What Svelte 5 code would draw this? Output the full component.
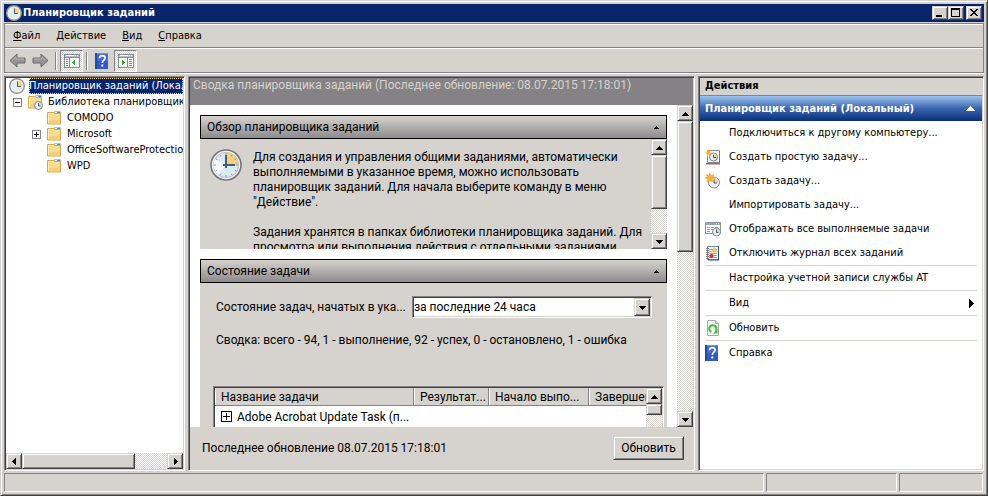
<script>
  let overviewOpen = $state(true);
  let statusOpen = $state(true);
  let libraryOpen = $state(true);
  let period = $state('day');

  const menus = ['Файл', 'Действие', 'Вид', 'Справка'];

  const folders = [
    { name: 'COMODO', expandable: false },
    { name: 'Microsoft', expandable: true },
    { name: 'OfficeSoftwareProtectionPlatform', expandable: false },
    { name: 'WPD', expandable: false }
  ];

  const actions = [
    { label: 'Подключиться к другому компьютеру...' },
    { label: 'Создать простую задачу...', icon: 'basic' },
    { label: 'Создать задачу...', icon: 'create' },
    { label: 'Импортировать задачу...' },
    { label: 'Отображать все выполняемые задачи', icon: 'running' },
    { label: 'Отключить журнал всех заданий', icon: 'journal' },
    { label: 'Настройка учетной записи службы AT', line: true },
    { label: 'Вид', line: true, submenu: true },
    { label: 'Обновить', icon: 'refresh', line: true },
    { label: 'Справка', icon: 'help', line: true }
  ];

  const columns = ['Название задачи', 'Результат...', 'Начало выпо...', 'Завершение'];
</script>

{#snippet clock(size)}
  <svg width={size} height={size} viewBox="0 0 32 32" aria-hidden="true">
    <circle cx="16" cy="16" r="15" fill="#f4f4f6" stroke="#77757c" stroke-width="1.6" />
    <circle cx="16" cy="16" r="12.6" fill="#dbe9f5" stroke="#b9bcc6" />
    <path d="M5 10 16 16 8 26A13 13 0 0 1 5 10Z" fill="#f6fbff" />
    <path d="M16 16V3.6A12.4 12.4 0 0 1 28.4 16Z" fill="#f3cf7a" />
    <path d="M16 4v2M16 26v2M4 16h2M26 16h2M9.8 5.6l1 1.7M22.2 5.6l-1 1.7M9.8 26.4l1-1.7M22.2 26.4l-1-1.7M5.6 9.8l1.7 1M5.6 22.2l1.7-1M26.4 22.2l-1.7-1M26.4 9.8l-1.7 1" stroke="#7f95b0" />
    <path d="M16 6v13M13 16h12" fill="none" stroke="#3f5f86" stroke-width="2" />
  </svg>
{/snippet}

{#snippet smallClock()}
  <svg width="16" height="16" viewBox="0 0 16 16" aria-hidden="true">
    <circle cx="8" cy="8" r="7.3" fill="#f4f4f4" stroke="#94928f" stroke-width="1.4" />
    <circle cx="8" cy="8" r="5.6" fill="#e4edf5" />
    <path d="M8 8.500V2.400A5.600 5.600 0 0 1 13.600 8.500Z" fill="#f2d58a" />
    <path d="M8.500 3.500v5h3.500" fill="none" stroke="#4d5b70" />
  </svg>
{/snippet}

{#snippet folder(withClock)}
  <svg width="16" height="16" viewBox="-1 0 16 16" aria-hidden="true">
    <path d="M7.5 1.500h6v4h-6Z" fill="#fff" stroke="#d9b668" />
    <path d="M10 2h3v1h-3Z" fill="#3f8fe0" />
    <path d="M.500 2.500h6l1.500 1h5.500v10.500H.500Z" fill="#fbdc8e" stroke="#d6a94e" />
    <path d="M1 3h5.500v1H1ZM1 4h1v9H1Z" fill="#fdeebd" />
    <path d="M2 10h11v3.500H2Z" fill="#f5cf77" />
    {#if withClock}
      <circle cx="10.5" cy="11.5" r="4" fill="#eef5fb" stroke="#6b8199" />
      <path d="M10.5 11.5V8a3.5 3.5 0 0 1 3.5 3.5Z" fill="#f0d48c" />
      <path d="M10.5 9v3h2" fill="none" stroke="#44607f" />
    {/if}
  </svg>
{/snippet}

{#snippet help()}
  <svg width="16" height="16" viewBox="0 0 16 16" aria-hidden="true">
    <path d="M0 0h13v16H0Z" fill="#416bd4" />
    <path d="M0 8h13v8H0Z" fill="#3459c2" />
    <path d="M0 0h2v16H0Z" fill="#234a9c" />
    <path d="M2 0h11v1H2Z" fill="#6f92e4" />
    <path d="M4.5 5.200C4.5 3.200 5.800 2.600 7.200 2.600c1.600 0 2.900.800 2.900 2.400 0 2.200-2.800 2.300-2.800 5" fill="none" stroke="#fff" stroke-width="1.700" />
    <path d="M6.300 11.500h2v2h-2Z" fill="#fff" />
  </svg>
{/snippet}

{#snippet paneIcon(right)}
  <svg width="16" height="14" viewBox="0 0 16 14" shape-rendering="crispEdges" aria-hidden="true">
    <path d="M0 0h16v14H0Z" fill="#848e97" />
    <path d="M1 1h14v2H1Z" fill="#b5bec6" />
    <path d="M2 1h8v1H2ZM11 1h1v1h-1ZM13 1h1v1h-1Z" fill="#fff" />
    <path d="M1 4h14v9H1Z" fill="#f7f7f7" />
    {#if right}
      <path d="M9 4h1v9H9Z" fill="#848e97" />
      <path d="M11 5h3v1h-3ZM11 7h3v1h-3ZM11 9h3v1h-3ZM11 11h3v1h-3Z" fill="#6b8ec6" />
      <path d="M4 6h1v1h1v1h1v1H6v1H5v1H4Z" fill="#31ae31" />
    {:else}
      <path d="M5 4h1v9H5Z" fill="#848e97" />
      <path d="M2 5h2v1H2ZM2 7h2v1H2ZM2 9h2v1H2ZM2 11h2v1H2Z" fill="#6b8ec6" />
      <path d="M11 6h-1v1H9v1H8v1h1v1h1v1h1Z" fill="#31ae31" />
    {/if}
  </svg>
{/snippet}

{#snippet arrow(dir)}
  <svg class="arrow" width="7" height="7" viewBox="0 0 7 7" shape-rendering="crispEdges" aria-hidden="true">
    {#if dir === 'up'}
      <path d="M3 2h1v1h1v1h1v1h1v1H0V5h1V4h1V3h1Z" />
    {:else if dir === 'down'}
      <path d="M0 2h7v1H6v1H5v1H4v1H3V5H2V4H1V3H0Z" />
    {:else if dir === 'left'}
      <path d="M1 3h1V2h1V1h1V0h1v7H4V6H3V5H2V4H1Z" />
    {:else}
      <path d="M2 0h1v1h1v1h1v1h1v1H5v1H4v1H3v1H2Z" />
    {/if}
  </svg>
{/snippet}

{#snippet scrollbar(thumb, horizontal)}
  <div class="scrollbar" class:horizontal>
    <button class="raised" aria-label={horizontal ? 'Влево' : 'Вверх'}>{@render arrow(horizontal ? 'left' : 'up')}</button>
    <div class="track">
      <div class="thumb raised" style={horizontal ? `width: ${thumb}%` : `height: ${thumb}%`}></div>
    </div>
    <button class="raised" aria-label={horizontal ? 'Вправо' : 'Вниз'}>{@render arrow(horizontal ? 'right' : 'down')}</button>
  </div>
{/snippet}

{#snippet actionIcon(name)}
  {#if name === 'basic'}
    <svg width="16" height="16" viewBox="0 0 16 16" aria-hidden="true">
      <path d="M2.5 1.500h12v12h-12Z" fill="#fafafa" stroke="#8c8688" />
      <path d="M1 14h14v1.500H1Z" fill="#9c6a66" />
      <path d="M14.500 2v13" stroke="#7d7779" />
      <circle cx="8.500" cy="8" r="4" fill="#e8eff6" stroke="#76808e" />
      <path d="M8.500 8V4.500A3.500 3.500 0 0 1 12 8Z" fill="#f0d48c" />
      <path d="M8.500 6v2.500h2.500" fill="none" stroke="#4a5668" />
      <path d="M3 0 4 2 6 1 5 3 7 4 5 5 5.500 7 3.500 6 2 7.500 2 5 0 4 2 3 1 1 3 2Z" fill="#f8b63e" />
    </svg>
  {:else if name === 'create'}
    <svg width="16" height="16" viewBox="0 0 16 16" aria-hidden="true">
      <circle cx="9" cy="9.500" r="5.500" fill="#eef1f5" stroke="#8b8a8e" />
      <path d="M9 9.500V5A4.500 4.500 0 0 1 13.500 9.500Z" fill="#f0d48c" />
      <path d="M9 6.500v3.500h3" fill="none" stroke="#4a5668" />
      <path d="M4.500 0 5.800 2.500 9 1.500 7.500 4 9.500 5.500 7 6 7.500 9 4.800 7.500 2 9 2.700 6 0 5 2.400 3.800 1.500 1.300 3.800 2.400Z" fill="#f9b02c" stroke="#ef9a1c" stroke-width=".5" />
    </svg>
  {:else if name === 'running'}
    <svg width="16" height="16" viewBox="0 0 16 16" aria-hidden="true">
      <path d="M.5 1.500h15v11H.5Z" fill="#fbfbfb" stroke="#8a939c" />
      <path d="M1 2h14v2H1Z" fill="#9aa6b2" />
      <path d="M11 2h1v1h-1ZM13 2h1v1h-1Z" fill="#fff" />
      <path d="M2 6.500h3M6 6.500h3M10 6.500h3M2 8.500h3M6 8.500h2M2 10.500h3" stroke="#9298a0" />
      <circle cx="11.500" cy="11" r="4" fill="#e6f0f8" stroke="#7e8896" />
      <path d="M11.500 11V7.500A3.500 3.500 0 0 1 15 11Z" fill="#f0d48c" />
      <path d="M11.500 8.500v3h2" fill="none" stroke="#4a5668" />
    </svg>
  {:else if name === 'journal'}
    <svg width="16" height="16" viewBox="0 0 16 16" aria-hidden="true">
      <path d="M2.500 1.500h11v13h-11Z" fill="#f6f9fd" stroke="#5d8cc4" />
      <path d="M13 1h1v14.500H3v-1h10Z" fill="#2c5487" />
      <path d="M4 4.500h8M4 6.500h8M4 8.500h8M4 10.500h8M4 12.500h8" stroke="#7fa8d6" />
      <path d="M1 3.500h3M1 5.500h3M1 7.500h3M1 9.500h3M1 11.500h3M1 13.500h3" stroke="#808080" />
      <path d="M9.500 2 12.500 7h-6Z" fill="#fbd02c" stroke="#e8b820" stroke-width=".5" />
      <circle cx="6.500" cy="11" r="2" fill="#d8262a" />
    </svg>
  {:else if name === 'refresh'}
    <svg width="16" height="16" viewBox="0 0 16 16" aria-hidden="true">
      <path d="M2.500.5h8l3 3v12h-11Z" fill="#fdfdfd" stroke="#a8a8a8" />
      <path d="M10.500.5v3h3" fill="#e8e8e8" stroke="#a8a8a8" />
      <path d="M6.300 12A3.600 3.600 0 1 1 10.800 10.800" fill="none" stroke="#3cb83a" stroke-width="2" />
      <path d="M12.500 9v4.500H8Z" fill="#3cb83a" />
    </svg>
  {:else if name === 'help'}
    {@render help()}
  {/if}
{/snippet}

<div class="window">
  <header class="titlebar">
    {@render smallClock()}
    <h1>Планировщик заданий</h1>
    <div class="window-buttons">
      <button class="raised" aria-label="Свернуть">
        <svg width="12" height="10" viewBox="0 0 12 10" shape-rendering="crispEdges"><path d="M2 7h6v2H2Z" /></svg>
      </button>
      <button class="raised" aria-label="Развернуть">
        <svg width="12" height="10" viewBox="0 0 12 10" shape-rendering="crispEdges"><path d="M1 0h9v9H1ZM2 2v6h7V2Z" fill-rule="evenodd" /></svg>
      </button>
      <button class="raised close" aria-label="Закрыть">
        <svg width="12" height="10" viewBox="0 0 12 10" shape-rendering="crispEdges"><path d="M2 1h2v1h1v1h2V2h1V1h2v1H9v1H8v1H7v1h1v1h1v1h1v1H8V7H7V6H5v1H4v1H2V7h1V6h1V5h1V4H4V3H3V2H2Z" /></svg>
      </button>
    </div>
  </header>

  <div class="bars">
    <nav class="menubar">
      {#each menus as menu}
        <button><u>{menu[0]}</u>{menu.slice(1)}</button>
      {/each}
    </nav>
    <div class="toolbar">
      <button aria-label="Назад">
        <svg width="17" height="15" viewBox="0 0 17 15"><path d="M1 7.500 8 1v4h8v5H8v4Z" fill="#949494" stroke="#6b6b6b" /><path d="M3 7.500 7 4v2h8" fill="none" stroke="#b5b5b5" /></svg>
      </button>
      <button aria-label="Вперёд">
        <svg width="17" height="15" viewBox="0 0 17 15"><path d="M16 7.500 9 1v4H1v5h8v4Z" fill="#949494" stroke="#6b6b6b" /><path d="M2 6h8V4l3 3" fill="none" stroke="#b5b5b5" /></svg>
      </button>
      <span class="divider"></span>
      <button class="pressed" aria-label="Дерево консоли">{@render paneIcon(false)}</button>
      <span class="divider"></span>
      <button aria-label="Справка">{@render help()}</button>
      <button class="pressed" aria-label="Панель действий">{@render paneIcon(true)}</button>
    </div>
  </div>

  <main class="panes">
    <aside class="pane tree-pane">
      <ul class="tree">
        <li class="root">
          {@render smallClock()}
          <span class="selected">Планировщик заданий (Локальный)</span>
        </li>
        <li class="library">
          <button class="expander" aria-label="Свернуть библиотеку" onclick={() => (libraryOpen = !libraryOpen)}>
            <svg width="7" height="7" viewBox="0 0 7 7"><path d={libraryOpen ? 'M1 3h5v1H1Z' : 'M1 3h5v1H1ZM3 1h1v5H3Z'} /></svg>
          </button>
          {@render folder(true)}
          <span>Библиотека планировщика заданий</span>
        </li>
        {#if libraryOpen}
          {#each folders as item}
            <li class="child">
              {#if item.expandable}
                <button class="expander" aria-label="Развернуть {item.name}">
                  <svg width="7" height="7" viewBox="0 0 7 7"><path d="M1 3h5v1H1ZM3 1h1v5H3Z" /></svg>
                </button>
              {:else}
                <span class="no-expander"></span>
              {/if}
              {@render folder(false)}
              <span>{item.name}</span>
            </li>
          {/each}
        {/if}
      </ul>
      {@render scrollbar(78, true)}
    </aside>

    <section class="pane summary">
      <h2>Сводка планировщика заданий (Последнее обновление: 08.07.2015 17:18:01)</h2>
      <div class="summary-view">
        <div class="cards">
          <article class="card">
            <button class="card-title" onclick={() => (overviewOpen = !overviewOpen)}>
              <span>Обзор планировщика заданий</span>
              <svg width="5" height="3" viewBox="0 0 5 3" shape-rendering="crispEdges"><path d="M2 0h1v1h1v1h1v1H0V2h1V1h1Z" /></svg>
            </button>
            {#if overviewOpen}
              <div class="overview">
                <div class="overview-icon">{@render clock(32)}</div>
                <div class="overview-text">
                  <p>Для создания и управления общими заданиями, автоматически выполняемыми в указанное время, можно использовать планировщик заданий. Для начала выберите команду в меню "Действие".</p>
                  <p>Задания хранятся в папках библиотеки планировщика заданий. Для просмотра или выполнения действия с отдельными заданиями</p>
                </div>
                {@render scrollbar(69, false)}
              </div>
            {/if}
          </article>

          <article class="card">
            <button class="card-title" onclick={() => (statusOpen = !statusOpen)}>
              <span>Состояние задачи</span>
              <svg width="5" height="3" viewBox="0 0 5 3" shape-rendering="crispEdges"><path d="M2 0h1v1h1v1h1v1H0V2h1V1h1Z" /></svg>
            </button>
            {#if statusOpen}
              <div class="status">
                <div class="period">
                  <label for="period">Состояние задач, начатых в ука...</label>
                  <div class="select-box">
                    <select id="period" bind:value={period}>
                      <option value="hour">за последний час</option>
                      <option value="day">за последние 24 часа</option>
                      <option value="week">за последние 7 дней</option>
                      <option value="month">за последние 30 дней</option>
                    </select>
                    <span class="drop raised">{@render arrow('down')}</span>
                  </div>
                </div>
                <p>Сводка: всего - 94, 1 - выполнение, 92 - успех, 0 - остановлено, 1 - ошибка</p>
                <div class="list">
                  <div class="list-view">
                    <table>
                      <thead>
                        <tr>
                          {#each columns as column}
                            <th>{column}</th>
                          {/each}
                        </tr>
                      </thead>
                      <tbody>
                        <tr>
                          <td>
                            <button class="expander" aria-label="Развернуть задачу">
                              <svg width="9" height="9" viewBox="0 0 9 9"><path d="M1 4h7v1H1ZM4 1h1v7H4Z" /></svg>
                            </button>
                            Adobe Acrobat Update Task (п...
                          </td>
                          <td></td>
                          <td></td>
                          <td></td>
                        </tr>
                      </tbody>
                    </table>
                  </div>
                  {@render scrollbar(7, false)}
                </div>
              </div>
            {/if}
          </article>
        </div>
        {@render scrollbar(45, false)}
      </div>
      <footer>
        <span>Последнее обновление 08.07.2015 17:18:01</span>
        <button class="refresh raised">Обновить</button>
      </footer>
    </section>

    <aside class="pane actions">
      <h2>Действия</h2>
      <button class="group">
        <span>Планировщик заданий (Локальный)</span>
        <svg width="9" height="5" viewBox="0 0 9 5" shape-rendering="crispEdges"><path d="M4 0h1v1h1v1h1v1h1v1h1v1H0V4h1V3h1V2h1V1h1Z" fill="#fff" /></svg>
      </button>
      <ul>
        {#each actions as action}
          <li class:line={action.line}>
            <button>
              <span class="icon">{@render actionIcon(action.icon)}</span>
              <span>{action.label}</span>
              {#if action.submenu}
                <svg class="submenu" width="5" height="9" viewBox="0 0 5 9" shape-rendering="crispEdges"><path d="M0 0h1v1h1v1h1v1h1v1h1v1H4v1H3v1H2v1H1v1H0Z" /></svg>
              {/if}
            </button>
          </li>
        {/each}
      </ul>
    </aside>
  </main>

  <div class="statusbar">
    <span></span>
    <span></span>
    <span></span>
  </div>
</div>

<style>
  :global(body) {
    margin: 0;
  }

  .window {
    --face: #d6d3ce;
    --shadow: #848284;
    --dark: #424142;
    display: flex;
    flex-direction: column;
    box-sizing: border-box;
    height: 100vh;
    padding: 3px;
    border: 1px solid;
    border-color: var(--face) var(--dark) var(--dark) var(--face);
    box-shadow: inset 1px 1px #fff, inset -1px -1px var(--shadow);
    background: var(--face);
    color: #000;
    font: 11px/16px "DejaVu Sans Condensed", "DejaVu Sans", Tahoma, sans-serif;
  }

  .window * {
    box-sizing: border-box;
  }

  button {
    display: flex;
    align-items: center;
    justify-content: center;
    padding: 0;
    border: none;
    background: none;
    color: inherit;
    font: inherit;
  }

  svg {
    display: block;
    flex: none;
  }

  h1,
  h2,
  p,
  ul {
    margin: 0;
    padding: 0;
    font-size: inherit;
    list-style: none;
  }

  .raised {
    border: 1px solid;
    border-color: var(--face) var(--dark) var(--dark) var(--face);
    box-shadow: inset 1px 1px #fff, inset -1px -1px var(--shadow);
    background: var(--face);
  }

  .titlebar {
    display: flex;
    align-items: center;
    gap: 1px;
    height: 18px;
    padding: 0 2px;
    background: #08246b;
    color: #fff;
    flex: none;
  }

  .titlebar h1 {
    flex: 1;
    font-weight: bold;
  }

  .window-buttons {
    display: flex;
    color: #000;
  }

  .window-buttons button {
    width: 16px;
    height: 14px;
  }

  .window-buttons .close {
    margin-left: 2px;
  }

  /* menu and toolbar */
  .bars {
    flex: none;
    margin-top: 1px;
    border: 1px solid var(--shadow);
    box-shadow: 0 1px #fff;
  }

  .menubar {
    display: flex;
    height: 24px;
    align-items: center;
    border-top: 1px solid #fff;
    border-bottom: 1px solid var(--shadow);
  }

  .menubar button {
    padding: 0 8px;
  }

  .toolbar {
    display: flex;
    height: 24px;
    align-items: center;
    padding-left: 1px;
    border-top: 1px solid #fff;
  }

  .toolbar button {
    width: 23px;
    height: 22px;
  }

  .toolbar .pressed {
    border: 1px solid;
    border-color: var(--shadow) #fff #fff var(--shadow);
    background: repeating-conic-gradient(#fff 0 25%, var(--face) 0 50%) 0 0 / 2px 2px;
  }

  .divider {
    width: 2px;
    height: 18px;
    margin: 0 3px;
    border-left: 1px solid var(--shadow);
    border-right: 1px solid #fff;
  }

  /* panes */
  .panes {
    display: grid;
    grid-template-columns: 181px 1fr 286px;
    gap: 3px;
    flex: 1;
    min-height: 0;
    margin-top: 3px;
  }

  .pane {
    display: flex;
    flex-direction: column;
    min-width: 0;
    min-height: 0;
    border: 1px solid;
    border-color: var(--shadow) #fff #fff var(--shadow);
    box-shadow: inset 1px 1px var(--dark), inset -1px -1px var(--face);
    padding: 1px;
    overflow: hidden;
    background: #fff;
  }

  .tree {
    flex: 1;
    overflow: hidden;
  }

  .tree li {
    display: flex;
    align-items: center;
    height: 16px;
    white-space: nowrap;
  }

  .root {
    gap: 4px;
    padding-left: 3px;
  }

  .selected {
    flex: 1;
    overflow: hidden;
    outline: 1px dotted #f7db94;
    outline-offset: -1px;
    background: #08246b;
    color: #fff;
  }

  .library {
    gap: 5px;
    padding-left: 7px;
  }

  .child {
    gap: 5px;
    padding-left: 26px;
  }

  .expander {
    flex: none;
    border: 1px solid var(--shadow);
    background: #fff;
  }

  .no-expander {
    flex: none;
    width: 9px;
  }

  /* scrollbars */
  .scrollbar {
    display: flex;
    flex-direction: column;
    flex: none;
    width: 16px;
  }

  .scrollbar button {
    flex: none;
    width: 16px;
    height: 16px;
  }

  .track {
    flex: 1;
    background: repeating-conic-gradient(#fff 0 25%, var(--face) 0 50%) 0 0 / 2px 2px;
  }

  .horizontal {
    flex-direction: row;
    width: auto;
    height: 16px;
  }

  .horizontal .thumb {
    height: 16px;
  }

  /* summary */
  .summary {
    background: var(--face);
    font: 12px/15px Roboto, "Noto Sans", sans-serif;
  }

  .summary h2 {
    flex: none;
    height: 27px;
    padding: 0 3px;
    background: var(--shadow);
    color: var(--face);
    font-weight: normal;
    white-space: nowrap;
  }

  .summary-view {
    display: flex;
    flex: 1;
    min-height: 0;
    background: #fff;
  }

  .cards {
    display: flex;
    flex-direction: column;
    gap: 10px;
    flex: 1;
    min-width: 0;
    padding: 10px;
    overflow: hidden;
  }

  .card {
    flex: none;
    background: var(--face);
  }

  .card-title {
    width: 100%;
    height: 24px;
    justify-content: space-between;
    padding: 0 7px 0 6px;
    border: 1px solid #000;
    background: linear-gradient(#d6d3ce, #8c8a8c);
  }

  .overview {
    display: flex;
    height: 110px;
    overflow: hidden;
  }

  .overview-icon {
    padding: 10px 11px 0 10px;
  }

  .overview-text {
    flex: 1;
    padding: 11px 5px 0 0;
  }

  .overview-text p {
    margin-bottom: 15px;
  }

  .status {
    padding: 13px 3px 0 13px;
  }

  .status p {
    margin-top: 15px;
    padding-left: 3px;
  }

  .period {
    display: flex;
    align-items: center;
    justify-content: space-between;
    padding: 0 12px 0 3px;
  }

  .select-box {
    position: relative;
    width: 240px;
  }

  select {
    display: block;
    width: 100%;
    height: 22px;
    padding: 0 18px 0 1px;
    border: 1px solid;
    border-color: var(--shadow) #fff #fff var(--shadow);
    border-radius: 0;
    box-shadow: inset 1px 1px var(--dark), inset -1px -1px var(--face);
    background: #fff;
    color: #000;
    font: inherit;
    appearance: none;
  }

  .drop {
    position: absolute;
    top: 2px;
    right: 2px;
    display: flex;
    align-items: center;
    justify-content: center;
    width: 16px;
    height: 18px;
    pointer-events: none;
  }

  .list {
    display: flex;
    height: 200px;
    margin-top: 38px;
    border: 1px solid;
    border-color: var(--shadow) #fff #fff var(--shadow);
    box-shadow: inset 1px 1px var(--dark), inset -1px -1px var(--face);
    padding: 1px;
    background: #fff;
  }

  .list-view {
    flex: 1;
    min-width: 0;
    overflow: hidden;
  }

  table {
    width: 100%;
    border-collapse: separate;
    border-spacing: 0;
    table-layout: fixed;
  }

  th {
    height: 18px;
    padding: 2px 0 0 6px;
    border-right: 1px solid var(--shadow);
    border-bottom: 1px solid var(--shadow);
    box-shadow: inset 1px 0 #fff;
    background: var(--face);
    font-weight: normal;
    text-align: left;
    white-space: nowrap;
    overflow: hidden;
  }

  th:nth-child(1) {
    width: 199px;
  }

  th:nth-child(2) {
    width: 75px;
  }

  th:nth-child(3) {
    width: 100px;
  }

  th:last-child {
    border-right: none;
  }

  td {
    padding: 4px 0 4px 6px;
    white-space: nowrap;
  }

  td .expander {
    display: inline-flex;
    margin-right: 2px;
    border-color: #000;
  }

  .summary footer {
    display: flex;
    flex: none;
    align-items: center;
    justify-content: space-between;
    height: 42px;
    padding: 0 9px 0 12px;
  }

  .refresh {
    width: 71px;
    height: 24px;
  }

  /* actions */
  .actions h2 {
    height: 18px;
    padding-left: 5px;
    border-bottom: 1px solid var(--shadow);
    background: var(--face);
    font-weight: bold;
  }

  .group {
    flex: none;
    justify-content: space-between;
    height: 25px;
    padding: 0 7px 0 5px;
    background: linear-gradient(#9cc3ef, #3a65ad 50%, #08307b);
    color: #fff;
    font-weight: bold;
  }

  .actions ul {
    padding: 0 5px;
  }

  .actions li button {
    width: 100%;
    height: 24px;
    justify-content: flex-start;
    gap: 8px;
    white-space: nowrap;
  }

  .line {
    border-top: 1px solid #d6d3ce;
  }

  .icon {
    width: 16px;
  }

  .submenu {
    margin: 0 3px 0 auto;
  }

  /* status bar */
  .statusbar {
    display: grid;
    grid-template-columns: 1fr 131px 84px;
    gap: 2px;
    flex: none;
    height: 19px;
    margin: 2px 1px 0 0;
  }

  .statusbar span {
    border: 1px solid;
    border-color: var(--shadow) #fff #fff var(--shadow);
  }
</style>
